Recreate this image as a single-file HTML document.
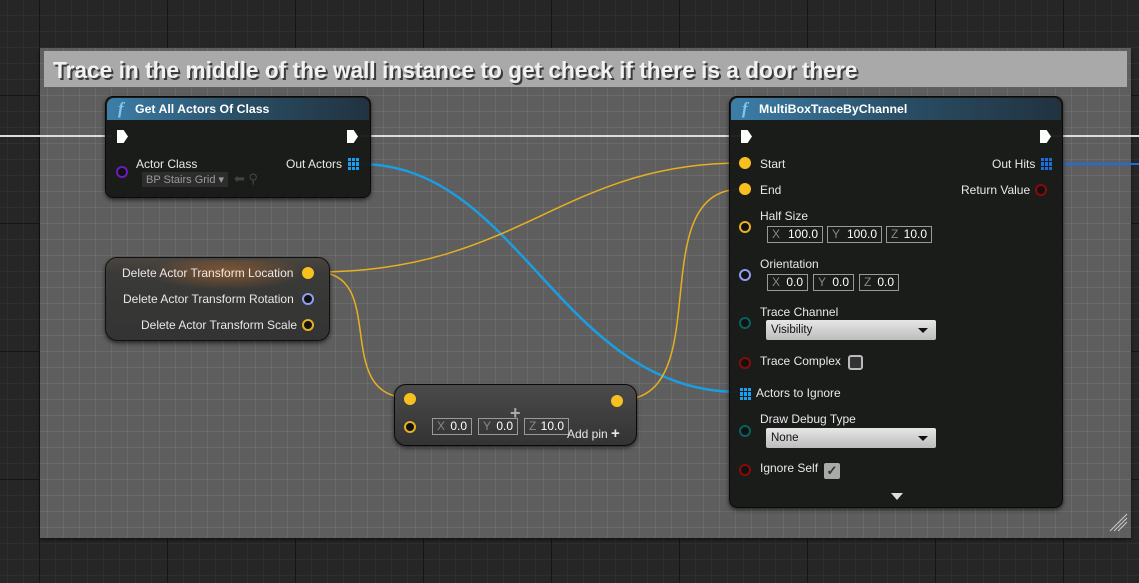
<!DOCTYPE html>
<html><head><style>
*{margin:0;padding:0;box-sizing:border-box}
body{width:1139px;height:583px;overflow:hidden;position:relative;background:#262626;font-family:"Liberation Sans",sans-serif;font-size:12px;color:#e8e8e8}
.grid{position:absolute;inset:0;background:
linear-gradient(90deg,#151515 1px,transparent 1px) 39px 0/128px 128px,
linear-gradient(#151515 1px,transparent 1px) 0 95px/128px 128px,
linear-gradient(90deg,#2e2e2e 1px,transparent 1px) 7px 0/16px 16px,
linear-gradient(#2e2e2e 1px,transparent 1px) 0 15px/16px 16px,#262626}
.comment{position:absolute;left:40px;top:48px;width:1091px;height:490px;background:
linear-gradient(90deg,rgba(255,255,255,.07) 1px,transparent 1px) 7px 0/16px 16px,
linear-gradient(rgba(255,255,255,.07) 1px,transparent 1px) 0 15px/16px 16px,#5e5e5e;box-shadow:0 2px 3px rgba(0,0,0,.5)}
.ctitle{position:absolute;left:44px;top:51px;width:1083px;height:36px;background:#a9a9a9;color:#f2f2f2;font-weight:bold;font-size:22.7px;line-height:38px;padding-left:9px;text-shadow:2px 2px 0 #3a3a3a;white-space:nowrap}
.node{position:absolute;background:rgba(22,24,22,.95);border:1px solid #0a0a0a;border-radius:8px;box-shadow:0 2px 4px rgba(0,0,0,.6)}
.hdr{position:absolute;left:1px;right:1px;top:1px;height:22px;border-radius:7px 7px 0 0;background:linear-gradient(90deg,#3d7ea8,#2a4f66 50%,#223240);font-weight:bold;color:#fff;line-height:22px;padding-left:28px;font-size:12.3px}
.hdr i{position:absolute;left:11px;top:0;font-family:"Liberation Serif",serif;color:#7fc7f0;font-size:17px}
.t{position:absolute;white-space:nowrap}
.pin{position:absolute;width:12px;height:12px;border-radius:50%;border:2px solid;background:#111}
.pin.f{background:currentColor}
.exec{position:absolute;width:11px;height:13px;background:#fff;clip-path:polygon(0 0,60% 0,100% 50%,60% 100%,0 100%)}
.arr{position:absolute;width:11px;height:12px;display:grid;grid-template-columns:repeat(3,3px);gap:1px}
.arr span{background:#1aa0f0}
.box{position:absolute;height:17px;border:1px solid #999;color:#fff;font-size:12px;line-height:15px}
.box b{font-weight:normal;color:#888;position:absolute;left:4px}
.box span{position:absolute;right:4px}
.dd{position:absolute;width:170px;height:20px;background:linear-gradient(#e6e6e6,#bdbdbd);color:#111;border-radius:2px;line-height:20px;padding-left:5px;font-size:11.5px}
.dd:after{content:"";position:absolute;right:8px;top:8px;border:5px solid transparent;border-top:5px solid #111;border-bottom:0}
</style></head><body>
<div class="grid"></div>
<div class="comment"></div>
<div class="ctitle">Trace in the middle of the wall instance to get check if there is a door there</div>

<svg style="position:absolute;left:0;top:0" width="1139" height="583">
<line x1="0" y1="136" x2="112" y2="136" stroke="#ddd" stroke-width="2"/>
<line x1="360" y1="136" x2="742" y2="136" stroke="#ddd" stroke-width="2"/>
<line x1="1050" y1="136" x2="1139" y2="136" stroke="#ddd" stroke-width="2"/>
<path d="M360 164 C520 164,560 392,740 392" stroke="#1a9ee0" stroke-width="2.5" fill="none"/>
<path d="M1050 164 L1139 164" stroke="#1a6ee0" stroke-width="2" fill="none"/>
<path d="M316 272 C520 272,560 163,742 163" stroke="#e8b020" stroke-width="1.5" fill="none"/>
<path d="M316 272 C390 272,330 398,410 398" stroke="#e8b020" stroke-width="1.5" fill="none"/>
<path d="M620 400 C720 400,640 189,742 189" stroke="#e8b020" stroke-width="1.5" fill="none"/>
<path d="M1127 522 L1118 531 M1127 518 L1114 531 M1127 514 L1110 531" stroke="#ccc" stroke-width="1"/>
</svg>

<div class="node" style="left:105px;top:96px;width:266px;height:102px">
<div class="hdr"><i>f</i>Get All Actors Of Class</div>
<div class="exec" style="left:11px;top:33px"></div>
<div class="exec" style="left:241px;top:33px"></div>
<div class="pin" style="left:10px;top:69px;color:#6a1cc0"></div>
<div class="t" style="left:30px;top:60px">Actor Class</div>
<div class="t" style="left:180px;top:60px">Out Actors</div>
<div class="arr" style="left:242px;top:61px"><span></span><span></span><span></span><span></span><span></span><span></span><span></span><span></span><span></span></div>
<div class="t" style="left:36px;top:75px;background:#2d2d2d;color:#999;padding:1px 4px;font-size:11px">BP Stairs Grid ▾</div>
<div class="t" style="left:128px;top:74px;color:#444;font-size:13px">⬅ ⚲</div>
</div>

<div class="node" style="left:105px;top:257px;width:225px;height:84px;background:linear-gradient(#4a4540,#3a3a38 20%,#333 );border-radius:12px;border-color:#111">
<div style="position:absolute;left:40px;top:2px;width:160px;height:30px;background:radial-gradient(ellipse at 50% 40%,rgba(200,110,40,.5),transparent 70%)"></div>
<div class="t" style="left:16px;top:8px">Delete Actor Transform Location</div>
<div class="pin f" style="left:196px;top:9px;color:#f5c020"></div>
<div class="t" style="left:17px;top:34px">Delete Actor Transform Rotation</div>
<div class="pin" style="left:196px;top:35px;color:#8f9ef0"></div>
<div class="t" style="left:35px;top:60px">Delete Actor Transform Scale</div>
<div class="pin" style="left:196px;top:61px;color:#e8b020"></div>
</div>

<div class="node" style="left:394px;top:384px;width:243px;height:62px;background:linear-gradient(#4a4a4a,#333);border-radius:12px">
<div class="pin f" style="left:9px;top:8px;color:#f5c020"></div>
<div class="pin f" style="left:216px;top:10px;color:#f5c020"></div>
<div class="t" style="left:115px;top:18px;color:#aaa;font-size:18px;font-weight:bold">+</div>
<div class="pin" style="left:9px;top:36px;color:#e8b020"></div>
<div class="box" style="left:37px;top:33px;width:40px"><b>X</b><span>0.0</span></div>
<div class="box" style="left:83px;top:33px;width:40px"><b>Y</b><span>0.0</span></div>
<div class="box" style="left:129px;top:33px;width:45px"><b>Z</b><span>10.0</span></div>
<div class="t" style="left:172px;top:40px">Add pin <b style="font-size:15px">+</b></div>
</div>

<div class="node" style="left:729px;top:96px;width:334px;height:412px">
<div class="hdr"><i>f</i>MultiBoxTraceByChannel</div>
<div class="exec" style="left:11px;top:33px"></div>
<div class="exec" style="left:310px;top:33px"></div>
<div class="pin f" style="left:9px;top:60px;color:#f5c020"></div>
<div class="t" style="left:30px;top:60px">Start</div>
<div class="t" style="left:262px;top:60px">Out Hits</div>
<div class="arr" style="left:311px;top:61px"><span style="background:#1a6ee0"></span><span style="background:#1a6ee0"></span><span style="background:#1a6ee0"></span><span style="background:#1a6ee0"></span><span style="background:#1a6ee0"></span><span style="background:#1a6ee0"></span><span style="background:#1a6ee0"></span><span style="background:#1a6ee0"></span><span style="background:#1a6ee0"></span></div>
<div class="pin f" style="left:9px;top:86px;color:#f5c020"></div>
<div class="t" style="left:30px;top:86px">End</div>
<div class="t" style="left:231px;top:86px">Return Value</div>
<div class="pin" style="left:305px;top:87px;color:#8a0a0a"></div>
<div class="t" style="left:30px;top:112px">Half Size</div>
<div class="pin" style="left:9px;top:124px;color:#e8b020"></div>
<div class="box" style="left:37px;top:129px;width:56px"><b>X</b><span>100.0</span></div>
<div class="box" style="left:97px;top:129px;width:55px"><b>Y</b><span>100.0</span></div>
<div class="box" style="left:156px;top:129px;width:46px"><b>Z</b><span>10.0</span></div>
<div class="t" style="left:30px;top:160px">Orientation</div>
<div class="pin" style="left:9px;top:172px;color:#8f9ef0"></div>
<div class="box" style="left:37px;top:177px;width:41px"><b>X</b><span>0.0</span></div>
<div class="box" style="left:83px;top:177px;width:41px"><b>Y</b><span>0.0</span></div>
<div class="box" style="left:129px;top:177px;width:40px"><b>Z</b><span>0.0</span></div>
<div class="t" style="left:30px;top:208px">Trace Channel</div>
<div class="pin" style="left:9px;top:220px;color:#0a6060"></div>
<div class="dd" style="left:36px;top:223px">Visibility</div>
<div class="pin" style="left:9px;top:260px;color:#8a0a0a"></div>
<div class="t" style="left:30px;top:257px">Trace Complex</div>
<div style="position:absolute;left:118px;top:258px;width:15px;height:15px;border:2px solid #bbb;border-radius:3px;background:#333"></div>
<div class="arr" style="left:10px;top:291px"><span></span><span></span><span></span><span></span><span></span><span></span><span></span><span></span><span></span></div>
<div class="t" style="left:26px;top:289px">Actors to Ignore</div>
<div class="t" style="left:30px;top:315px">Draw Debug Type</div>
<div class="pin" style="left:9px;top:328px;color:#0a6060"></div>
<div class="dd" style="left:36px;top:331px">None</div>
<div class="pin" style="left:9px;top:367px;color:#8a0a0a"></div>
<div class="t" style="left:30px;top:364px">Ignore Self</div>
<div style="position:absolute;left:94px;top:366px;width:16px;height:16px;background:#aaa;border-radius:2px;color:#333;font-size:13px;line-height:16px;text-align:center;font-weight:bold">✓</div>
<div style="position:absolute;left:161px;top:396px;border:6px solid transparent;border-top:7px solid #ddd;border-bottom:0"></div>
</div>
</body></html>
